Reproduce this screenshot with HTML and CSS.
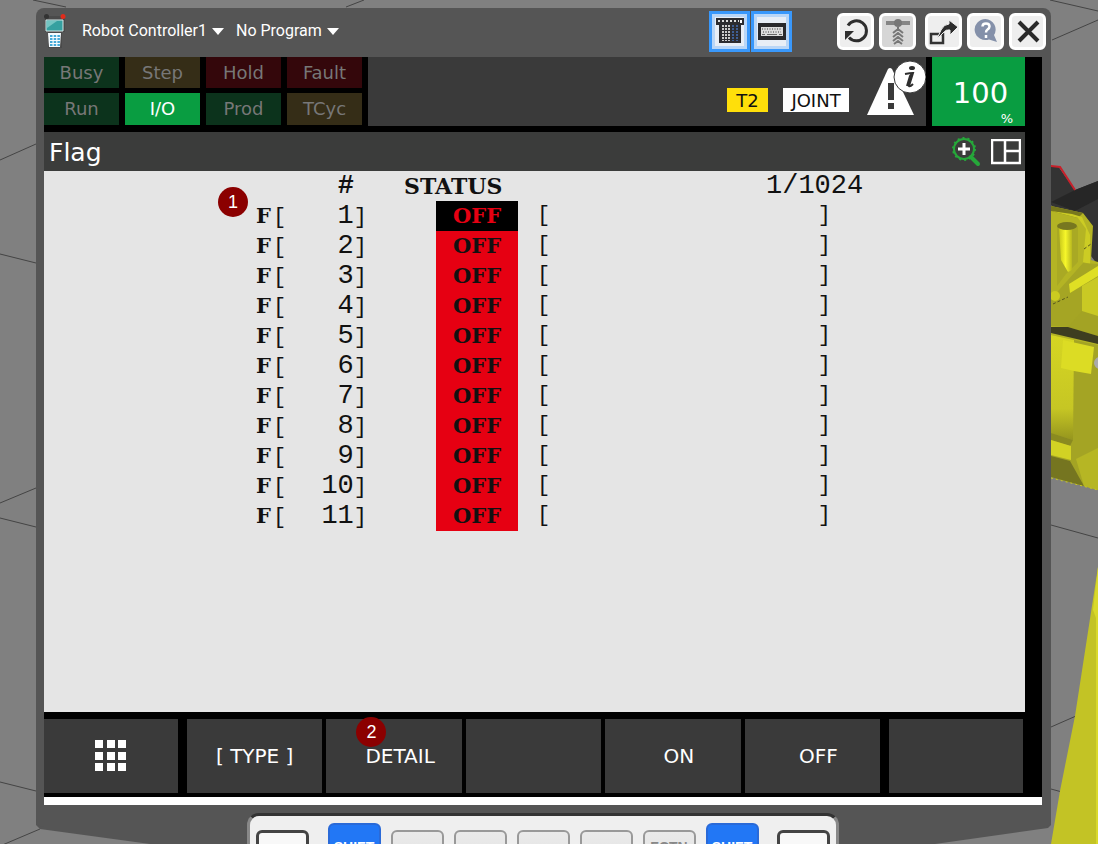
FILE: index.html
```html
<!DOCTYPE html>
<html lang="en">
<head>
<meta charset="utf-8">
<meta name="viewport" content="width=device-width, initial-scale=1">
<title>Robot Controller1 - Flag</title>
<link rel="stylesheet" href="styles.css">
</head>
<body>
<svg class="scene" viewBox="0 0 1098 844" preserveAspectRatio="none" aria-hidden="true">
  <defs>
    <linearGradient id="pin" x1="0" x2="1"><stop offset="0" stop-color="#c6c61a"/><stop offset=".5" stop-color="#f6f62a"/><stop offset="1" stop-color="#b8b81e"/></linearGradient>
    <linearGradient id="arm" x1="0" y1="0" x2="0" y2="1"><stop offset="0" stop-color="#d6d622"/><stop offset=".7" stop-color="#c6c624"/><stop offset="1" stop-color="#95951e"/></linearGradient>
  </defs>
  <g fill="none" stroke="#444" stroke-width="1">
    <path d="M33 0 66 7M346 7 364 0M0 160 36 144M0 254 36 263M0 503 36 488M0 518 36 527M0 782 36 791M0 846 40 829"/>
    <path d="M1050 0 1098 11M1052 40 1098 20M1051 525 1098 538M1051 727 1076 716M1051 789 1062 792"/>
  </g>
  <path fill="#333" d="M1051 166h7l17 24 23-9v84l-47-60z"/>
  <path fill="#262626" d="M1051 202 1075 190 1098 181v18l-23 12z"/>
  <path fill="none" stroke="#c8202a" stroke-width="2" d="M1051 166 1060 167 1075 190"/>
  <path fill="#b4b424" d="M1051 206 1083 213 1093 226 1091 260 1098 262V490L1051 477z"/>
  <path fill="#77771d" d="M1051 206 1083 213 1078 218 1051 211z"/>
  <path fill="#cccc24" d="M1051 211 1078 218 1086 229 1083 262 1090 264 1090 235 1082 217 1072 214z"/>
  <path fill="#a9a924" d="M1057 226h21v36l-12 12-9 12z"/>
  <path fill="url(#pin)" d="M1059 228h13v42l-4 2-7-12z"/>
  <ellipse cx="1067" cy="226" rx="10" ry="4" fill="#777720"/>
  <path fill="#a5a524" d="M1051 299 1083 263 1098 264V324L1082 320 1068 327 1051 326z"/>
  <path fill="#dfdf24" d="M1069 284 1098 266V276L1070 293z"/>
  <path fill="#c9c924" d="M1082 286 1098 277V324L1082 312z"/>
  <path fill="#a3a324" d="M1068 327 1082 311 1098 316V336z"/>
  <circle cx="1055" cy="296" r="5" fill="#cbcb20"/>
  <path fill="none" stroke="#55551c" stroke-dasharray="3 2" d="M1053 304 1068 297M1084 249 1091 244"/>
  <path fill="#3d3d20" d="M1051 327H1068L1098 336V344L1051 333z"/>
  <path fill="#a4a424" d="M1051 335 1098 345V490L1051 477z"/>
  <path fill="url(#arm)" d="M1051 335 1074 340 1073 440 1051 433z"/>
  <path fill="#dcdc24" d="M1063 340 1094 347 1091 374 1074 371 1061 368z"/>
  <path fill="#8a8a20" d="M1051 433 1073 440 1070 446 1051 440z"/>
  <path fill="#d2d224" d="M1051 440 1071 446V460L1051 455z"/>
  <path fill="#757520" d="M1051 456 1070 461 1084 486 1051 477z"/>
  <path fill="#b6b624" d="M1076 459 1098 448V490L1084 486z"/>
  <path fill="none" stroke="#c8c824" stroke-dasharray="2 3" d="M1051 478 1098 490"/>
  <circle cx="1100" cy="363" r="6" fill="#aaa"/>
  <path fill="#c3c325" d="M1098 567 1075 716 1060 791 1051 844H1098z"/>
  <path fill="#d9d92a" d="M1098 567 1093 610 1096 618V844H1098z"/>
  <path fill="#555" d="M36 815V825L40 829 150 844H935L1048 828 1051 825V815z"/>
</svg>

<main class="pendant">
  <header class="titlebar">
    <svg class="logo" viewBox="0 0 22 34" aria-hidden="true">
      <path d="M1 2h20v16h-3v16H4V18H1z" fill="#4a4a4a"/>
      <circle cx="2.500" cy="2.500" r="2.500" fill="#333"/><circle cx="19" cy="2.500" r="2.500" fill="#e02c1c"/>
      <path d="M2 6h17v11H2z" fill="#35a0a0" stroke="#d5e5e5"/>
      <path d="M3 7h10L3 14z" fill="#74c5c2"/>
      <path d="M4 19h13l-1 14H5z" fill="#f6fcff"/>
      <path d="M6 22h10M6 25h10M6 28h10M6 31h10" stroke="#45a9d8" stroke-width="2" stroke-dasharray="2.500 1.200"/>
    </svg>
    <div class="picker">
      <select aria-label="Controller"><option>Robot Controller1</option></select>
      <svg class="caret" viewBox="0 0 12 7" aria-hidden="true"><path d="M0 0h12L6 7z" fill="#fff"/></svg>
    </div>
    <div class="picker">
      <select aria-label="Program"><option>No Program</option></select>
      <svg class="caret" viewBox="0 0 12 7" aria-hidden="true"><path d="M0 0h12L6 7z" fill="#fff"/></svg>
    </div>
    <div class="toggles">
      <button class="toggle" aria-label="Pendant keys">
        <svg viewBox="0 0 28 26" aria-hidden="true"><path d="M0 0h28v7h-3v18H3V7H0z" fill="#2c2c30"/><path d="M2 3h21" stroke="#ddd" stroke-width="2" stroke-dasharray="2 2"/><path d="M24 2h2v3h-2z" fill="#fff"/><path d="M7 7v16M10 7v16M13 7v16" stroke="#ccc" stroke-width="2" stroke-dasharray="2 1"/><path d="M17 7v16M21 7v16" stroke="#3f5f95" stroke-width="2" stroke-dasharray="2 1"/></svg>
      </button>
      <button class="toggle" aria-label="Keyboard">
        <svg viewBox="0 0 28 26" aria-hidden="true"><path d="M0 5h28v17H0z" fill="#29292c"/><path d="M3 9h22v9H3z" fill="#ddd"/><path d="M4 11h20M5 14h18" stroke="#3a3a3c" stroke-dasharray="1 1.500"/><path d="M4 16.500h3M9 16.500h10M21 16.500h3" stroke="#666"/></svg>
      </button>
    </div>
    <div class="tools">
      <button class="tool" aria-label="Reload">
        <svg viewBox="0 0 30 30" aria-hidden="true"><path d="M7 9.500A10 10 0 1 1 8 21.500" fill="none" stroke="#2d2d2d" stroke-width="3"/><path d="M4 15h9L4 24z" fill="#2d2d2d"/></svg>
      </button>
      <button class="tool tool-dim" aria-label="Jog">
        <svg viewBox="0 0 30 30" aria-hidden="true"><path d="M3 5h24v4H3z" fill="#858585"/><circle cx="15" cy="7" r="4" fill="#777"/><path d="M15 11v2M10 17l5-4 5 4M10 21l5-4 5 4M10 25l5-4 5 4M11 28l4-3 4 3" fill="none" stroke="#777" stroke-width="2"/></svg>
      </button>
    </div>
    <div class="tools">
      <button class="tool" aria-label="Detach">
        <svg viewBox="0 0 30 30" aria-hidden="true"><path d="M2 18h12v9H2z" fill="none" stroke="#333" stroke-width="2.500"/><path d="M8 23 12 14Q15 8 20 8V4l9 7-8 8v-5q-4-1-7 3z" fill="#2d2d2d" stroke="#eee"/></svg>
      </button>
      <button class="tool" aria-label="Help">
        <svg viewBox="0 0 30 30" aria-hidden="true"><path d="M14.500 3A11 10.500 0 1 0 18 23.500L26 26 23 19A11 10.500 0 0 0 14.500 3z" fill="#8490a9"/><path d="M11.500 10.500q0-3 3.500-3t3.500 3q0 1.500-2 3-1.500 1-1.500 3M15 19v3" fill="none" stroke="#fff" stroke-width="2.500"/></svg>
      </button>
      <button class="tool" aria-label="Close">
        <svg viewBox="0 0 30 30" aria-hidden="true"><path d="M6 6 25 25M25 6 6 25" stroke="#2a2a2a" stroke-width="4"/></svg>
      </button>
    </div>
  </header>

  <section class="display">
    <div class="statusbar">
      <div class="lamps">
        <span class="lamp green">Busy</span><span class="lamp amber">Step</span><span class="lamp red">Hold</span><span class="lamp red">Fault</span>
        <span class="lamp green">Run</span><span class="lamp lit">I/O</span><span class="lamp green">Prod</span><span class="lamp amber">TCyc</span>
      </div>
      <div class="modes">
        <span class="mode mode-t2">T2</span>
        <span class="mode mode-joint">JOINT</span>
        <svg class="alert" viewBox="0 0 60 56" role="img" aria-label="Alarm information">
          <path d="M22 8q2-2 4 0L48 54H1z" fill="#fff"/>
          <path d="M22 22h6v17h-6zM22 42h6v6h-6z" fill="#3a3a3a"/>
          <circle cx="44" cy="16" r="16" fill="#fff" stroke="#3a3a3a"/>
          <ellipse cx="46" cy="7" rx="3" ry="2" fill="#2e2e2e"/>
          <path d="M39 13q5-1 8-1l-4 13q1 1 4-2M47 12l-3 3-3 10" fill="none" stroke="#2e2e2e" stroke-width="2"/>
        </svg>
      </div>
      <div class="override"><span>100</span><small>%</small></div>
    </div>

    <div class="heading">
      <h1>Flag</h1>
      <button class="plain" aria-label="Zoom in">
        <svg width="30" height="30" viewBox="0 0 30 30" aria-hidden="true"><path d="m19 20 7 7" stroke="#26a83a" stroke-width="4" stroke-linecap="round"/><circle cx="12" cy="12" r="10" fill="none" stroke="#26a83a" stroke-width="2"/><circle cx="12" cy="12" r="11" fill="none" stroke="#26a83a" stroke-width="2" stroke-dasharray="2 3"/><path d="M12 6v12M6 12h12" stroke="#fff" stroke-width="3"/></svg>
      </button>
      <button class="plain" aria-label="Split screen">
        <svg width="30" height="26" viewBox="0 0 30 26" aria-hidden="true"><path d="M1 1h28v23H1zM14 1v23M14 12h15" fill="none" stroke="#fff" stroke-width="2.500"/></svg>
      </button>
    </div>

    <div class="content">
      <table class="flags">
        <colgroup><col class="c-name"><col class="c-index"><col class="c-gap"><col class="c-status"><col class="c-comment"><col></colgroup>
        <thead><tr><th></th><th class="hash">#</th><th class="status-head" colspan="2">STATUS</th><th class="count" colspan="2">1/1024</th></tr></thead>
        <tbody>
          <tr class="current"><td class="name"><b>F</b><i>[</i></td><td class="index">1<i>]</i></td><td></td><td class="state">OFF</td><td class="comment"><div><i>[</i><i>]</i></div></td><td></td></tr>
          <tr><td class="name"><b>F</b><i>[</i></td><td class="index">2<i>]</i></td><td></td><td class="state">OFF</td><td class="comment"><div><i>[</i><i>]</i></div></td><td></td></tr>
          <tr><td class="name"><b>F</b><i>[</i></td><td class="index">3<i>]</i></td><td></td><td class="state">OFF</td><td class="comment"><div><i>[</i><i>]</i></div></td><td></td></tr>
          <tr><td class="name"><b>F</b><i>[</i></td><td class="index">4<i>]</i></td><td></td><td class="state">OFF</td><td class="comment"><div><i>[</i><i>]</i></div></td><td></td></tr>
          <tr><td class="name"><b>F</b><i>[</i></td><td class="index">5<i>]</i></td><td></td><td class="state">OFF</td><td class="comment"><div><i>[</i><i>]</i></div></td><td></td></tr>
          <tr><td class="name"><b>F</b><i>[</i></td><td class="index">6<i>]</i></td><td></td><td class="state">OFF</td><td class="comment"><div><i>[</i><i>]</i></div></td><td></td></tr>
          <tr><td class="name"><b>F</b><i>[</i></td><td class="index">7<i>]</i></td><td></td><td class="state">OFF</td><td class="comment"><div><i>[</i><i>]</i></div></td><td></td></tr>
          <tr><td class="name"><b>F</b><i>[</i></td><td class="index">8<i>]</i></td><td></td><td class="state">OFF</td><td class="comment"><div><i>[</i><i>]</i></div></td><td></td></tr>
          <tr><td class="name"><b>F</b><i>[</i></td><td class="index">9<i>]</i></td><td></td><td class="state">OFF</td><td class="comment"><div><i>[</i><i>]</i></div></td><td></td></tr>
          <tr><td class="name"><b>F</b><i>[</i></td><td class="index">10<i>]</i></td><td></td><td class="state">OFF</td><td class="comment"><div><i>[</i><i>]</i></div></td><td></td></tr>
          <tr><td class="name"><b>F</b><i>[</i></td><td class="index">11<i>]</i></td><td></td><td class="state">OFF</td><td class="comment"><div><i>[</i><i>]</i></div></td><td></td></tr>
        </tbody>
      </table>
      <span class="marker marker-list">1</span>
    </div>

    <nav class="softkeys" aria-label="Function keys">
      <button class="softkey" aria-label="Menu">
        <svg width="32" height="32" viewBox="0 0 32 32" aria-hidden="true"><path d="M0 0h8v8H0zM12 0h8v8h-8zM23 0h8v8h-8zM0 12h8v8H0zM12 12h8v8h-8zM23 12h8v8h-8zM0 23h8v8H0zM12 23h8v8h-8zM23 23h8v8h-8z" fill="#fff"/></svg>
      </button>
      <div class="fkeys">
        <button class="softkey">[ TYPE ]</button>
        <button class="softkey shifted">DETAIL<span class="marker marker-detail">2</span></button>
        <button class="softkey" aria-label="F3"></button>
        <button class="softkey shifted">ON</button>
        <button class="softkey shifted">OFF</button>
      </div>
      <button class="softkey" aria-label="Next"></button>
    </nav>
  </section>
  <div class="strip"></div>
</main>

<div class="keypad">
  <button class="key nav" aria-label="Previous"></button>
  <div class="keyrow">
    <button class="key shift">SHIFT</button>
    <button class="key" aria-label="Menu"></button>
    <button class="key" aria-label="Select"></button>
    <button class="key" aria-label="Edit"></button>
    <button class="key" aria-label="Data"></button>
    <button class="key">FCTN</button>
    <button class="key shift">SHIFT</button>
  </div>
  <button class="key nav" aria-label="Next page"></button>
</div>
</body>
</html>
```

FILE: styles.css
```css
* { box-sizing: border-box; }

body {
  position: relative;
  height: 100vh;
  margin: 0;
  padding: 8px 47px 0 36px;
  overflow: hidden;
  background: #808080;
  font-family: "DejaVu Sans", Verdana, sans-serif;
}

button {
  margin: 0;
  padding: 0;
  border: 0;
  color: inherit;
  font: inherit;
}

.scene {
  position: absolute;
  inset: 0;
  width: 100%;
  height: 100%;
}

.pendant {
  position: relative;
  padding: 0 9px 22px 8px;
  background: #555;
  border-radius: 8px;
}

/* Title bar */
.titlebar {
  display: flex;
  align-items: center;
  height: 49px;
  margin-right: -4px;
  padding-bottom: 3px;
}

.logo { width: 22px; height: 34px; margin-right: 16px; }

.picker {
  display: flex;
  align-items: center;
  gap: 5px;
  margin-right: 12px;
}

.picker select {
  padding: 0;
  border: 0;
  appearance: none;
  background: none;
  color: #fff;
  font: 16px/20px Roboto, "Liberation Sans", sans-serif;
}

.caret { width: 12px; height: 7px; }

.toggles { display: flex; gap: 1px; margin-left: auto; margin-right: 45px; }

.toggle {
  display: grid;
  place-items: center;
  width: 41px;
  height: 41px;
  border: 3px solid #3998fb;
  background: #e8eef6;
  box-shadow: inset 0 0 0 3px #b9d6f7;
}

.toggle svg { width: 28px; height: 26px; }

.tools { display: flex; gap: 5px; }
.tools + .tools { margin-left: 9px; }

.tool {
  display: grid;
  place-items: center;
  width: 37px;
  height: 37px;
  border: 3px solid #fff;
  border-radius: 6px;
  background: #eee;
}

.tool-dim { background: #d6d6d6; }
.tool svg { width: 30px; height: 30px; }

/* Display */
.display { background: #000; padding-bottom: 4px; }

.statusbar {
  display: flex;
  gap: 6px;
  height: 69px;
  padding-right: 17px;
}

.lamps {
  display: grid;
  grid-template-columns: repeat(4, 75px);
  grid-template-rows: 31px 32px;
  gap: 5px 6px;
}

.lamp {
  color: #777;
  font-size: 18px;
  line-height: 31px;
  text-align: center;
}

.green { background: #0c331c; }
.amber { background: #352d17; }
.red { background: #34070b; }
.lit { background: #099d41; color: #fff; }

.modes {
  display: flex;
  flex: 1;
  justify-content: flex-end;
  align-items: flex-end;
  background: #3a3a3a;
}

.mode {
  height: 24px;
  margin-bottom: 14px;
  color: #111;
  font-size: 18px;
  line-height: 25px;
  text-align: center;
}

.mode-t2 { width: 41px; margin-right: 15px; background: #ffdf0a; }
.mode-joint { width: 66px; margin-right: 17px; background: #fff; }
.alert { width: 60px; height: 56px; margin-bottom: 9px; }

.override {
  display: flex;
  flex-direction: column;
  justify-content: flex-end;
  width: 93px;
  padding: 0 12px 0 16px;
  background: #099d41;
  color: #fff;
}

.override span { font-size: 29px; line-height: 36px; text-align: center; }
.override small { font-size: 13px; line-height: 15px; text-align: right; }

.heading {
  display: flex;
  align-items: center;
  gap: 9px;
  height: 39px;
  margin: 6px 17px 0 0;
  padding: 0 4px 0 5px;
  background: #3b3c3b;
}

.heading h1 {
  flex: 1;
  margin: 0;
  padding-top: 3px;
  color: #fff;
  font-size: 25px;
  font-weight: 400;
  line-height: 36px;
}

.plain { display: flex; background: none; }

/* Flag list */
.content {
  position: relative;
  min-height: 541px;
  margin-right: 17px;
  background: #e5e5e5;
}

.flags {
  width: 100%;
  border-collapse: collapse;
  table-layout: fixed;
  color: #111;
  font: 27px/30px "Liberation Mono", monospace;
}

.flags th, .flags td {
  height: 30px;
  padding: 0;
  font-weight: 400;
  text-align: left;
  vertical-align: middle;
  white-space: nowrap;
}

.c-name { width: 246px; }
.c-index { width: 80px; }
.c-gap { width: 66px; }
.c-status { width: 82px; }
.c-comment { width: 313px; }

.flags b { font: 700 21px/20px "DejaVu Serif", serif; }
.flags .state { font: 700 21px/30px "DejaVu Serif", serif; }
.flags .status-head { font: 700 22px/30px "DejaVu Serif", serif; }
.flags i { font-size: 22px; font-style: normal; line-height: 20px; }
.flags .comment i { line-height: 30px; }

.flags .name { padding-left: 212px; }
.name i { margin-left: 2px; }
.flags .index { padding-right: 3px; text-align: right; }
.flags .hash { padding-right: 16px; text-align: right; font-weight: 700; }
.flags .status-head { padding-left: 34px; }
.flags .count { padding-left: 248px; }
.flags .state { background: #e60012; text-align: center; }
.flags .current .state { background: #000; color: #e60012; }
.comment div { display: flex; justify-content: space-between; padding-left: 19px; }

.marker {
  position: absolute;
  width: 30px;
  height: 30px;
  border-radius: 50%;
  background: #8b0000;
  color: #fff;
  font: 18px/30px "Liberation Sans", sans-serif;
  text-align: center;
}

.marker-list { top: 16px; left: 174px; }
.marker-detail { top: -2px; left: 30px; }

/* Function keys */
.softkeys {
  display: grid;
  grid-template-columns: 134px 1fr 134px;
  gap: 9px;
  padding: 7px 19px 0 0;
}

.fkeys { display: grid; grid-template-columns: repeat(5, 1fr); gap: 4px; }

.softkey {
  position: relative;
  display: flex;
  align-items: center;
  justify-content: center;
  height: 74px;
  background: #3a3a3a;
  color: #fff;
  font-size: 20px;
}

.softkey.shifted { padding-left: 12px; }

.strip { height: 8px; background: #fff; }

/* Hardware keys under the screen */
.keypad {
  position: relative;
  display: flex;
  align-items: flex-start;
  justify-content: space-between;
  width: 592px;
  height: 90px;
  margin: -14px auto 0 211px;
  padding: 7px 6px 0;
  border: 3px solid #333;
  border-color: #333 #888;
  border-radius: 12px;
  background: #efefef;
}

.keyrow { display: flex; gap: 10px; }

.key {
  width: 53px;
  height: 60px;
  margin-top: 7px;
  padding-top: 8px;
  border: 2px solid #999;
  border-radius: 6px;
  background: linear-gradient(#eaeaea, #ddd);
  color: #888;
  font: 700 14px/14px "Liberation Sans", sans-serif;
  display: flex;
  justify-content: center;
}

.key.nav { border: 3px solid #444; background: #f8f8f8; }

.key.shift {
  height: 67px;
  margin-top: 0;
  padding-top: 15px;
  border-color: #2a6ad8;
  background: #2277f5;
  color: #fff;
}
```
